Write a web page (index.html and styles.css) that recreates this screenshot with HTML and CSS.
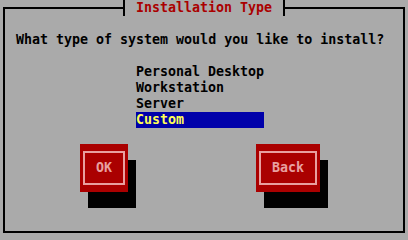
FILE: index.html
```html
<!DOCTYPE html>
<html lang="en">
<head>
    <meta charset="UTF-8">
    <meta name="viewport" content="width=device-width, initial-scale=1.0">
    <title>Installation Type</title>
    <link rel="stylesheet" href="styles.css">
</head>
<body>
    <!-- dialog frame -->
    <div class="dialog">
        <div class="dialog-title">Installation Type</div>

        <p class="question">What type of system would you like to install?</p>

        <!-- install choices -->
        <ul class="choices">
            <li class="choice">Personal Desktop</li>
            <li class="choice">Workstation</li>
            <li class="choice">Server</li>
            <li class="choice selected">Custom</li>
        </ul>

        <!-- buttons -->
        <div class="buttons">
            <div class="btn btn-ok"><span class="btn-face">OK</span></div>
            <div class="btn btn-back"><span class="btn-face">Back</span></div>
        </div>
    </div>
</body>
</html>
```

FILE: styles.css
```css
* {
    margin: 0;
    padding: 0;
    box-sizing: border-box;
}

body {
    width: 408px;
    height: 240px;
    background: #aaaaaa;
    overflow: hidden;
    font-family: 'DejaVu Sans Mono', 'Liberation Mono', monospace;
    font-weight: bold;
    font-size: 13.3px;
    line-height: 16px;
    color: #000;
}

/* dialog frame */
.dialog {
    margin: 7px 3px;
    height: 226px;
    border: 2px solid #000;
}

.dialog-title {
    width: 162px;
    height: 16px;
    margin: -9px 0 0 118px;
    padding: 0 11px;
    border-left: 2px solid #000;
    border-right: 2px solid #000;
    background: #aaaaaa;
    color: #aa0000;
    white-space: nowrap;
}

.question {
    margin-top: 16px;
    padding-left: 11px;
    white-space: nowrap;
}

/* list */
.choices {
    list-style: none;
    margin: 16px 0 0 131px;
    width: 128px;
}

.choice {
    height: 16px;
    white-space: nowrap;
}

.choice.selected {
    background: #0000aa;
    color: #ffff55;
}

/* buttons */
.buttons {
    display: flex;
    margin: 16px 0 0 75px;
    gap: 128px;
}

.btn {
    height: 48px;
    padding: 7px 3px;
    background: #aa0000;
    box-shadow: 8px 16px 0 #000;
}

.btn-ok {
    width: 48px;
}

.btn-back {
    width: 64px;
}

.btn-face {
    display: flex;
    align-items: center;
    justify-content: center;
    height: 34px;
    border: 2px solid #e8a0a0;
    color: #e8a0a0;
}
```
